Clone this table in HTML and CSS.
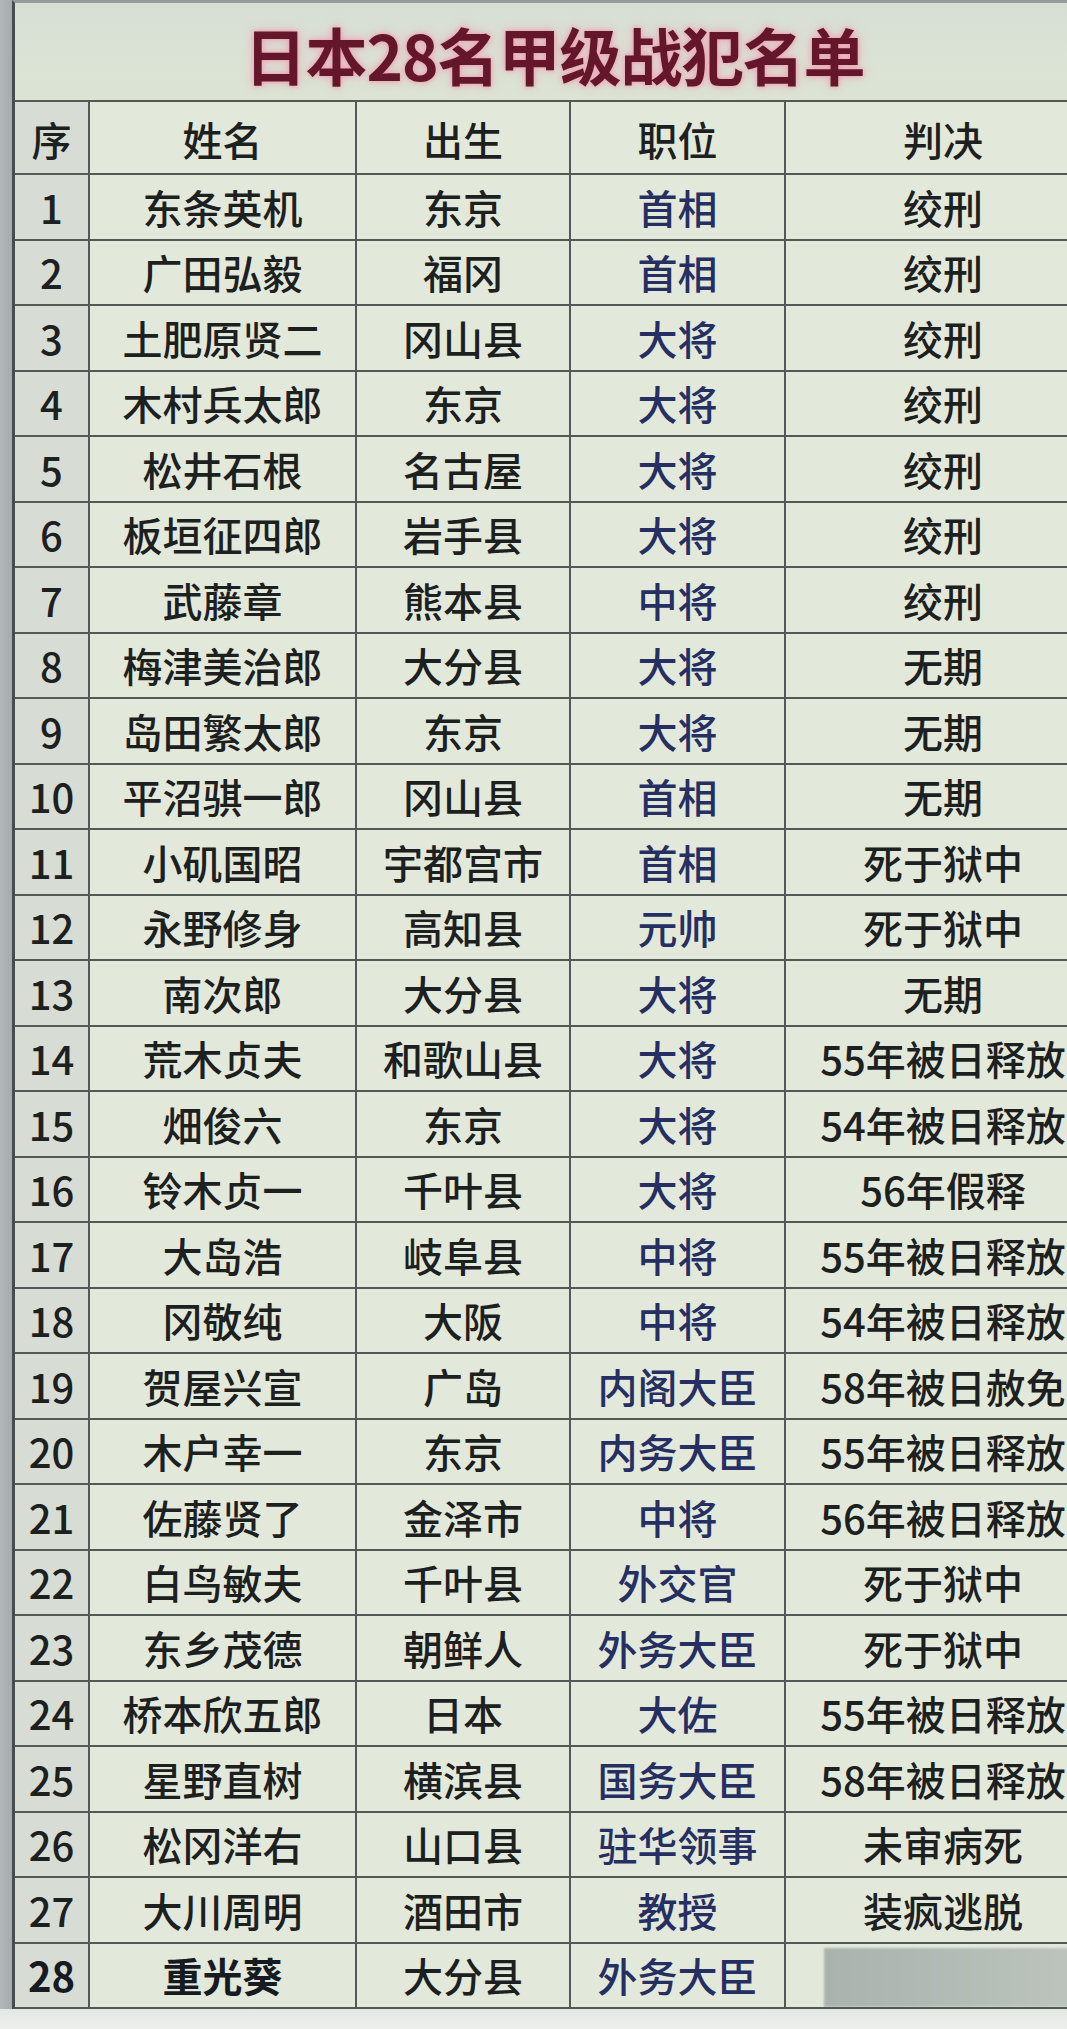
FILE: index.html
```html
<!DOCTYPE html>
<html lang="zh-CN">
<head>
<meta charset="utf-8">
<title>日本28名甲级战犯名单</title>
<link rel="stylesheet" href="styles.css">
</head>
<body>
<div class="page">
  <div class="edge"></div>
  <div class="sheet">
    <h1 class="title">日本28名甲级战犯名单</h1>
    <div class="grid">
      <div class="cell c1 head">序</div><div class="cell head">姓名</div><div class="cell head">出生</div><div class="cell head">职位</div><div class="cell head last">判决</div>

      <div class="cell c1">1</div><div class="cell">东条英机</div><div class="cell">东京</div><div class="cell pos">首相</div><div class="cell last">绞刑</div>
      <div class="cell c1">2</div><div class="cell">广田弘毅</div><div class="cell">福冈</div><div class="cell pos">首相</div><div class="cell last">绞刑</div>
      <div class="cell c1">3</div><div class="cell">土肥原贤二</div><div class="cell">冈山县</div><div class="cell pos">大将</div><div class="cell last">绞刑</div>
      <div class="cell c1">4</div><div class="cell">木村兵太郎</div><div class="cell">东京</div><div class="cell pos">大将</div><div class="cell last">绞刑</div>
      <div class="cell c1">5</div><div class="cell">松井石根</div><div class="cell">名古屋</div><div class="cell pos">大将</div><div class="cell last">绞刑</div>
      <div class="cell c1">6</div><div class="cell">板垣征四郎</div><div class="cell">岩手县</div><div class="cell pos">大将</div><div class="cell last">绞刑</div>
      <div class="cell c1">7</div><div class="cell">武藤章</div><div class="cell">熊本县</div><div class="cell pos">中将</div><div class="cell last">绞刑</div>
      <div class="cell c1">8</div><div class="cell">梅津美治郎</div><div class="cell">大分县</div><div class="cell pos">大将</div><div class="cell last">无期</div>
      <div class="cell c1">9</div><div class="cell">岛田繁太郎</div><div class="cell">东京</div><div class="cell pos">大将</div><div class="cell last">无期</div>
      <div class="cell c1">10</div><div class="cell">平沼骐一郎</div><div class="cell">冈山县</div><div class="cell pos">首相</div><div class="cell last">无期</div>
      <div class="cell c1">11</div><div class="cell">小矶国昭</div><div class="cell">宇都宫市</div><div class="cell pos">首相</div><div class="cell last">死于狱中</div>
      <div class="cell c1">12</div><div class="cell">永野修身</div><div class="cell">高知县</div><div class="cell pos">元帅</div><div class="cell last">死于狱中</div>
      <div class="cell c1">13</div><div class="cell">南次郎</div><div class="cell">大分县</div><div class="cell pos">大将</div><div class="cell last">无期</div>
      <div class="cell c1">14</div><div class="cell">荒木贞夫</div><div class="cell">和歌山县</div><div class="cell pos">大将</div><div class="cell last">55年被日释放</div>
      <div class="cell c1">15</div><div class="cell">畑俊六</div><div class="cell">东京</div><div class="cell pos">大将</div><div class="cell last">54年被日释放</div>
      <div class="cell c1">16</div><div class="cell">铃木贞一</div><div class="cell">千叶县</div><div class="cell pos">大将</div><div class="cell last">56年假释</div>
      <div class="cell c1">17</div><div class="cell">大岛浩</div><div class="cell">岐阜县</div><div class="cell pos">中将</div><div class="cell last">55年被日释放</div>
      <div class="cell c1">18</div><div class="cell">冈敬纯</div><div class="cell">大阪</div><div class="cell pos">中将</div><div class="cell last">54年被日释放</div>
      <div class="cell c1">19</div><div class="cell">贺屋兴宣</div><div class="cell">广岛</div><div class="cell pos">内阁大臣</div><div class="cell last">58年被日赦免</div>
      <div class="cell c1">20</div><div class="cell">木户幸一</div><div class="cell">东京</div><div class="cell pos">内务大臣</div><div class="cell last">55年被日释放</div>
      <div class="cell c1">21</div><div class="cell">佐藤贤了</div><div class="cell">金泽市</div><div class="cell pos">中将</div><div class="cell last">56年被日释放</div>
      <div class="cell c1">22</div><div class="cell">白鸟敏夫</div><div class="cell">千叶县</div><div class="cell pos">外交官</div><div class="cell last">死于狱中</div>
      <div class="cell c1">23</div><div class="cell">东乡茂德</div><div class="cell">朝鲜人</div><div class="cell pos">外务大臣</div><div class="cell last">死于狱中</div>
      <div class="cell c1">24</div><div class="cell">桥本欣五郎</div><div class="cell">日本</div><div class="cell pos">大佐</div><div class="cell last">55年被日释放</div>
      <div class="cell c1">25</div><div class="cell">星野直树</div><div class="cell">横滨县</div><div class="cell pos">国务大臣</div><div class="cell last">58年被日释放</div>
      <div class="cell c1">26</div><div class="cell">松冈洋右</div><div class="cell">山口县</div><div class="cell pos">驻华领事</div><div class="cell last">未审病死</div>
      <div class="cell c1">27</div><div class="cell">大川周明</div><div class="cell">酒田市</div><div class="cell pos">教授</div><div class="cell last">装疯逃脱</div>
      <div class="cell c1 bold">28</div><div class="cell bold">重光葵</div><div class="cell">大分县</div><div class="cell pos">外务大臣</div><div class="cell last redacted"><div class="blur"></div></div>
    </div>
  </div>
</div>
<div class="foot"></div>
</body>
</html>
```

FILE: styles.css
```css
html, body {
  margin: 0;
  padding: 0;
}

body {
  width: 1067px;
  height: 2029px;
  overflow: hidden;
  background: #e8ebe8;
  font-family: "Noto Sans CJK SC", "Noto Sans", sans-serif;
  color: #1c201f;
}

.page {
  display: flex;
  width: 1100px;
}

.edge {
  flex: none;
  width: 12px;
  background: linear-gradient(90deg, #b3b8ba, #a4aaad);
}

.sheet {
  flex: none;
  width: 1085px;
  border-left: 3px solid #464d4c;
  border-top: 3px solid #959b9a;
  background: #dbe2d7;
}

.title {
  margin: 0;
  height: 97px;
  display: flex;
  align-items: center;
  justify-content: center;
  padding-right: 6px;
  padding-top: 4px;
  box-sizing: border-box;
  font-size: 62px;
  font-weight: 700;
  line-height: 1;
  letter-spacing: -1px;
  color: #64162a;
  text-shadow: 0 0 4px rgba(238, 150, 172, 0.95), 0 0 12px rgba(236, 160, 180, 0.75);
  background: linear-gradient(180deg, #d7ded5, #dbe3d6 60%, #dbe4d3);
}

.grid {
  display: grid;
  grid-template-columns: 75px 267px 214px 215px 314px;
  grid-template-rows: 73px repeat(28, 65.5px);
  border-top: 2px solid #525957;
  background: #e3e9da;
}

.cell {
  box-sizing: border-box;
  display: flex;
  align-items: center;
  justify-content: center;
  border-right: 2px solid #525957;
  border-bottom: 2px solid #525957;
  font-size: 40px;
  font-weight: 500;
  line-height: 1;
  white-space: nowrap;
  overflow: hidden;
  background: #e3e9da;
}

.c1 {
  background: #d7ddd4;
}

.head {
  padding-top: 2px;
}

.last {
  border-right: none;
}

.pos {
  color: #252f62;
}

.bold {
  font-weight: 600;
  color: #161b22;
}

.redacted {
  justify-content: flex-start;
  align-items: stretch;
  padding: 4px 0 0 38px;
}

.blur {
  flex: 1;
  background: linear-gradient(90deg, #aab3ad 0%, #afb8b2 30%, #b6beb8 60%, #bfc6bf 100%);
  filter: blur(1px);
}

.foot {
  height: 20px;
  background: linear-gradient(180deg, #e4e8e5, #ecefec);
}
```
